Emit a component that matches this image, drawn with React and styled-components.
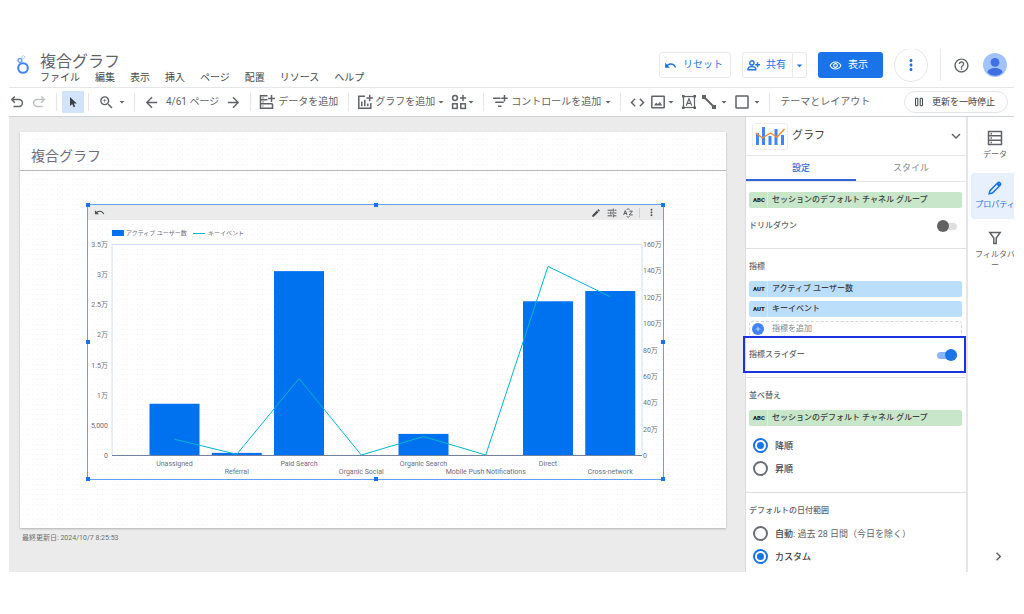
import React, { useState } from 'react'
import styled, { createGlobalStyle, css } from 'styled-components'
import {
    MdUndo,
    MdZoomIn,
    MdArrowBack,
    MdArrowForward,
    MdArrowDropDown,
    MdCode,
    MdMoreVert,
    MdHelpOutline,
    MdOutlineRemoveRedEye,
    MdEdit,
    MdExpandMore,
    MdChevronRight,
    MdAdd,
} from 'react-icons/md'

const GlobalStyle = createGlobalStyle`
    *{
        box-sizing:border-box;
    }

    body{
        margin:0;
        background:#ffffff;
        font-family:Roboto, "Noto Sans CJK JP", sans-serif;
        font-size:10px;
        line-height:16px;
        color:#3c4043;
    }

    button{
        font:inherit;
        color:inherit;
        background:none;
        border:0;
        padding:0;
        cursor:pointer;
    }

    h1, h2, p{
        margin:0;
        font-weight:400;
    }

    svg{
        display:block;
        flex:none;
    }
`

const Window = styled.div`
    display:flex;
    flex-direction:column;
    height:100vh;
    padding:49px 10px 42px 9px;
`

// HEADER
const Header = styled.header`
    display:flex;
    align-items:center;
    flex:none;
    height:38px;
    padding:0 7px 6px 7px;
    overflow:hidden;
`

const TitleBlock = styled.div`
    margin-left:10px;
    padding-top:8px;
`

const DocTitle = styled.h1`
    font-size:16px;
    line-height:18px;
    color:#5f6368;
`

const Menu = styled.nav`
    display:flex;
    gap:15px;
`

const MenuButton = styled.button`
    line-height:14px;
    color:#45484c;
`

const HeaderActions = styled.div`
    display:flex;
    align-items:center;
    margin-left:auto;
`

const OutlineButton = styled.button`
    display:flex;
    align-items:center;
    justify-content:center;
    gap:6px;
    height:26px;
    padding:0 7px 0 4px;
    border:1px solid #e8eaed;
    border-radius:3px;
    color:#1a73e8;
`

const SplitButton = styled.div`
    display:flex;
    margin:0 11px;

    ${OutlineButton}:first-child{
        padding:0 6px 0 4px;
        border-radius:3px 0 0 3px;
    }

    ${OutlineButton}:last-child{
        padding:0;
        border-left:0;
        border-radius:0 3px 3px 0;
    }
`

const ViewButton = styled.button`
    display:flex;
    align-items:center;
    gap:6px;
    height:26px;
    padding:0 15px 0 11px;
    border-radius:3px;
    background:#1a73e8;
    color:#ffffff;
`

const MoreButton = styled.button`
    display:grid;
    place-items:center;
    width:34px;
    height:34px;
    margin:0 12px 0 11px;
    border:1px solid #e4e6e9;
    border-radius:50%;
    color:#1a73e8;
`

const HeaderDivider = styled.span`
    width:1px;
    height:32px;
    margin-right:12px;
    background:#e8eaed;
`

const HelpButton = styled.button`
    margin-right:13px;
    color:#5f6368;
`

// TOOLBAR
const Toolbar = styled.div`
    display:flex;
    align-items:center;
    flex:none;
    height:30px;
    padding-right:6px;
    border-top:1px solid #e4e6e9;
    border-bottom:1px solid #cfd3d6;
    color:#5f6368;
    white-space:nowrap;
`

const ToolGroup = styled.div`
    display:flex;
    align-items:center;
    gap:${props => props.$gap || 0}px;
    padding:0 ${props => props.$end ?? 6}px 0 ${props => props.$start ?? 8}px;
    border-left:1px solid #e4e6e9;
    height:18px;

    &:first-child{
        border-left:0;
    }
`

const ToolButton = styled.button`
    display:flex;
    align-items:center;
    gap:${props => props.$gap ?? 3}px;
    opacity:${props => (props.disabled ? 0.4 : 1)};
`

const Caret = styled(MdArrowDropDown)`
    width:12px;
    height:12px;
    margin-left:-2px;
`

const PointerButton = styled.button`
    display:grid;
    place-items:center;
    width:22px;
    height:22px;
    border-radius:1px;
    background:#d2e3fc;
    color:#3c4043;
`

const PauseButton = styled.button`
    display:flex;
    align-items:center;
    gap:8px;
    height:22px;
    margin-left:auto;
    padding:0 12px 0 9px;
    border:1px solid #e4e6e9;
    border-radius:11px;
    font-size:9px;
    color:#3c4043;
`

// BODY
const Body = styled.div`
    display:flex;
    flex:1;
    min-height:0;
    overflow:hidden;
`

const Workspace = styled.main`
    flex:1;
    min-width:0;
    padding:15px 19px 0 11px;
    background:#ebebeb;
    border-right:1px solid #dddddd;
`

const Page = styled.section`
    padding-bottom:48px;
    background-color:#ffffff;
    background-image:radial-gradient(circle, #f1f1f3 0, #f1f1f3 0.5px, transparent 1px);
    background-size:5px 5px;
    box-shadow:0 1px 2px rgba(0,0,0,0.25);
`

const PageTitle = styled.h2`
    padding:14px 11px 4px;
    border-bottom:1px solid #b9b9b9;
    font-size:14px;
    line-height:20px;
    color:#6d6f7c;
`

const UpdatedAt = styled.p`
    padding:3px 2px;
    font-size:7px;
    line-height:14px;
    color:#6f6f6f;
`

const ChartFrame = styled.div`
    position:relative;
    margin:33px 62px 0 67px;
    border:1px solid #669df6;
`

const Handle = styled.i`
    position:absolute;
    left:${props => props.$x}%;
    top:${props => props.$y}%;
    width:4px;
    height:4px;
    margin:-2px;
    background:#1a73e8;
`

const ChartToolbar = styled.div`
    display:flex;
    align-items:center;
    gap:6px;
    height:15px;
    padding:0 6px;
    background:#ebebeb;
    color:#4a4d51;

    button:first-child{
        margin-right:auto;
    }
`

const ChartDivider = styled.span`
    width:1px;
    height:10px;
    background:#d0d0d0;
`

const ChartSvg = styled.svg`
    width:100%;
    height:auto;
    font-size:7px;
    fill:#6d6f7c;
`

// PROPERTY PANEL
const Panel = styled.aside`
    flex:none;
    width:222px;
    border-right:2px solid #e4e6e9;
    background:#ffffff;
`

const PanelHeader = styled.div`
    display:flex;
    align-items:center;
    height:39px;
    padding:0 1px 0 6px;
    border-bottom:1px solid #e4e6e9;
    font-size:11px;

    button{
        margin-left:auto;
        color:#5f6368;
    }
`

const ChartType = styled.span`
    display:grid;
    place-items:center;
    width:36px;
    height:27px;
    margin-right:4px;
    border:1px solid #eceef0;
    border-radius:3px;
`

const Tabs = styled.div`
    display:flex;
    border-bottom:1px solid #e4e6e9;
`

const Tab = styled.button`
    flex:1;
    height:25px;
    font-size:9px;
    font-weight:${props => (props.$active ? 500 : 400)};
    color:${props => (props.$active ? '#3367d6' : '#80868b')};
    border-bottom:2px solid ${props => (props.$active ? '#3367d6' : 'transparent')};
`

const Section = styled.section`
    position:relative;
    padding:10px 4px 12px 3px;
    border-bottom:1px solid #e0e0e0;
    font-size:8px;

    &:last-child{
        border-bottom:0;
    }
`

const SectionTitle = styled.h2`
    margin-bottom:6px;
    font-size:8px;
    font-weight:500;
    line-height:16px;
    color:#5f6368;
`

const Chip = styled.button`
    display:flex;
    align-items:center;
    width:100%;
    height:16px;
    margin-bottom:4px;
    border-radius:2px;
    background:${props => (props.$kind === 'ABC' ? '#c8e6c9' : '#bbdefb')};
    font-weight:500;
    color:#3c4043;

    b{
        width:19px;
        height:16px;
        margin-right:4px;
        padding-left:4px;
        border-right:1px solid rgba(255,255,255,0.35);
        font-size:6px;
        font-weight:900;
        text-align:left;
        color:#212121;
    }
`

const AddMetric = styled.button`
    display:flex;
    align-items:center;
    gap:8px;
    width:100%;
    height:16px;
    padding-left:2px;
    border:1px dashed #d5d7da;
    border-radius:2px;
    color:#80868b;

    svg{
        width:12px;
        height:12px;
        padding:2px;
        border-radius:50%;
        background:#4285f4;
        color:#ffffff;
    }
`

const SwitchLabel = styled.label`
    display:flex;
    align-items:center;
    justify-content:space-between;
    height:20px;
    margin-top:8px;
    padding-right:5px;
    font-weight:500;
    color:#5f6368;
`

const Switch = styled.input`
    appearance:none;
    display:grid;
    align-items:center;
    width:20px;
    height:12px;
    margin:0;

    &::before, &::after{
        content:"";
        grid-area:1 / 1;
    }

    &::before{
        height:7px;
        border-radius:4px;
        background:#dedede;
    }

    &::after{
        width:12px;
        height:12px;
        border-radius:50%;
        background:#616161;
    }

    &:checked::before{
        background:#8ab4f8;
    }

    &:checked::after{
        justify-self:end;
        background:#1a73e8;
    }
`

// frame laid over the panel around the slider setting
const Highlight = styled.span`
    position:absolute;
    left:-3px;
    right:0;
    bottom:4px;
    height:37px;
    border:2px solid #1b34e0;
    pointer-events:none;
`

const RadioGroup = styled.div`
    margin-top:${props => (props.$tight ? -3 : 8)}px;
`

const RadioLabel = styled.label`
    display:flex;
    align-items:center;
    gap:7px;
    height:23px;
    padding-left:4px;
    font-size:9px;
    font-weight:500;
    white-space:pre-wrap;
    color:#45484c;

    span span{
        font-weight:400;
        color:#5f6368;
    }
`

const Radio = styled.input`
    appearance:none;
    display:grid;
    place-items:center;
    width:15px;
    height:15px;
    margin:0;
    border:2px solid #6b6f74;
    border-radius:50%;

    &:checked{
        border-color:#1a73e8;
    }

    &:checked::before{
        content:"";
        width:7px;
        height:7px;
        border-radius:50%;
        background:#1a73e8;
    }
`

// RIGHT RAIL
const Rail = styled.nav`
    display:flex;
    flex-direction:column;
    flex:none;
    width:46px;
    padding:6px 0 7px 3px;
    background:#ffffff;
`

const RailButton = styled.button`
    display:flex;
    flex-direction:column;
    align-items:center;
    flex:none;
    gap:3px;
    width:48px;
    min-height:46px;
    padding:7px 4px 0;
    margin-bottom:4px;
    border-radius:3px;
    font-size:8px;
    line-height:11px;
    color:#5f6368;
    word-break:break-all;

    ${props =>
        props.$active &&
        css`
            background:#e8f0fe;
            color:#1a73e8;
        `}
`

const CollapseButton = styled.button`
    margin:auto 0 0 19px;
    color:#5f6368;
`

// ICONS
const Line = ({ size = 16, width = 1.5, children }) => (
    <svg width={size} height={size} viewBox="0 0 16 16" fill="none" stroke="currentColor" strokeWidth={width}>
        {children}
    </svg>
)

const Logo = () => (
    <svg width="14" height="22" viewBox="0 0 14 22" fill="none" stroke="#4285f4">
        <circle cx="7" cy="14" r="4.8" strokeWidth="2.1" />
        <circle cx="4" cy="6.5" r="2" strokeWidth="1.3" stroke="#669df6" />
        <circle cx="7.3" cy="3" r="1.4" strokeWidth="0.9" stroke="#aecbfa" />
    </svg>
)

const UndoIcon = () => (
    <Line>
        <path d="M5.8 2.5 2.8 5.6l3 3.1M3 5.6h7a3.4 3.4 0 0 1 0 6.8H4.5" />
    </Line>
)

const RedoIcon = () => (
    <Line>
        <path d="m10.2 2.5 3 3.1-3 3.1M13 5.6H6a3.4 3.4 0 0 0 0 6.8h5.5" />
    </Line>
)

const PointerIcon = () => (
    <svg width="12" height="12" viewBox="0 0 12 12" fill="currentColor">
        <path d="M3 1v9l2.2-2 1.4 3.2 1.6-.7-1.4-3.1h3z" />
    </svg>
)

const AddDataIcon = () => (
    <Line>
        <path d="M8.5 1.8h-7v12.4h12V9.8M1.5 5.8h7M1.5 9.8h12M12.5 1v7M9 4.5h7" />
        <path d="M3.4 3.8h1.2M3.4 7.8h1.2M3.4 12h1.2" strokeWidth="1.2" />
    </Line>
)

const AddChartIcon = () => (
    <Line>
        <path d="M8 2.2H1.8v12h12V9M12.7.8v6.4M9.5 4h6.4" />
        <path d="M4.8 7.5v4.7M7.8 5.8v6.4M10.8 9.5v2.7" />
    </Line>
)

const BlocksIcon = () => (
    <Line>
        <circle cx="4" cy="4" r="2.4" />
        <rect x="1.6" y="9.8" width="4.6" height="4.6" />
        <rect x="9.8" y="9.8" width="4.6" height="4.6" />
        <path d="M12 .8V7M9 4h6.2" />
    </Line>
)

const ControlIcon = () => (
    <Line>
        <path d="M1 4.2h7.5M3.3 8.2h8.4M6 12.2h3.4M12.5 1v6.4M9.3 4.2h6.4" />
    </Line>
)

const ImageIcon = () => (
    <Line>
        <rect x="1.8" y="2.2" width="12.4" height="11.6" rx="0.5" />
        <path d="m4 11.5 2.2-3 1.6 1.8 2-2.4 2.4 3.6z" fill="currentColor" stroke="none" />
    </Line>
)

const TextBoxIcon = () => (
    <Line width={1.2}>
        <rect x="2.5" y="2.5" width="11" height="11" />
        <path d="M5.3 11.6 8 4.6l2.7 7M6.2 9.4h3.6" />
        <path d="M1 1h2.6v2.6H1zM12.4 1H15v2.6h-2.6zM1 12.4h2.6V15H1zM12.4 12.4H15V15h-2.6z" fill="currentColor" stroke="none" />
    </Line>
)

const LineIcon = () => (
    <Line width={2}>
        <path d="m3 3 10 10" />
        <path d="M1 1h4v4H1zM11 11h4v4h-4z" fill="currentColor" stroke="none" />
    </Line>
)

const SquareIcon = () => (
    <Line>
        <rect x="2" y="2" width="12" height="12" rx="0.5" />
    </Line>
)

const PauseIcon = () => (
    <Line size={10} width={1.6}>
        <path d="M2.5 2h3.6v12H2.5zM9.9 2h3.6v12H9.9z" />
    </Line>
)

const ShareIcon = () => (
    <Line size={13} width={1.7}>
        <circle cx="6" cy="4.8" r="2.6" />
        <path d="M1.2 13.2v-1c0-2 3-2.8 4.8-2.8s4.8.8 4.8 2.8v1zM13 4v6M10 7h6" />
    </Line>
)

const Avatar = () => (
    <svg width="24" height="24" viewBox="0 0 24 24" role="img" aria-label="アカウント">
        <circle cx="12" cy="12" r="12" fill="#a1c2fa" />
        <circle cx="12" cy="9.3" r="4.4" fill="#3f6fe0" />
        <path d="M4.5 19.5c0-3 4-4.5 7.5-4.5s7.5 1.5 7.5 4.5c-1.8 2-4.6 3.3-7.5 3.3s-5.7-1.3-7.5-3.3z" fill="#3f6fe0" />
    </svg>
)

const TuneIcon = () => (
    <Line size={10}>
        <path d="M1 3.5h8M12 3.5h3M1 8h3M7 8h8M1 12.5h7M11 12.5h4M10 1v5M6 5.5v5M10 10v5" />
    </Line>
)

const SortIcon = () => (
    <Line size={10} width={1.4}>
        <path d="m1 11 2.7-7 2.7 7M2 8.8h3.5M10 5h5l-5 6h5.5M6 3l2.2-2.2L10.4 3M6 13l2.2 2.2 2.2-2.2" />
    </Line>
)

const ComboIcon = () => (
    <svg width="30" height="22" viewBox="0 0 30 22">
        <path d="M1 8h3v12H1zM7 2h3v18H7zM13.5 11h3v9h-3zM19.5 4h3v16h-3zM26 10h3v10h-3z" fill="#4285f4" />
        <path d="m1 8 6.5 5 8-5 6.5 4 7.5-8" fill="none" stroke="#fa8b2c" strokeWidth="1.4" />
    </svg>
)

const DataIcon = () => (
    <Line>
        <path d="M1.5 1.5h13v13h-13zM1.5 5.8h13M1.5 10.2h13" />
        <path d="M3.5 3.7h1.5M3.5 8h1.5M3.5 12.4h1.5" />
    </Line>
)

const PencilIcon = () => (
    <Line>
        <path d="M2.2 13.8 3 10.6 10.8 2.8a1.5 1.5 0 0 1 2.2 0l.2.2a1.5 1.5 0 0 1 0 2.2L5.4 13z" />
        <path d="m9.5 4.5 2-2 2.2 2-2 2.2z" fill="currentColor" stroke="none" />
    </Line>
)

const FilterIcon = () => (
    <Line>
        <path d="M2.8 2.5h10.4L9.2 8v5.5H6.8V8z" />
    </Line>
)

// CHART
const LEFT = 24
const RIGHT = 554
const TOP = 24
const BASE = 235
const STEP = 62.25
const FIRST = 86.5

const channels = [
    { name: 'Unassigned', users: 8500, events: 12 },
    { name: 'Referral', users: 350, events: 0.5 },
    { name: 'Paid Search', users: 30500, events: 58 },
    { name: 'Organic Social', users: 0, events: 0 },
    { name: 'Organic Search', users: 3500, events: 14 },
    { name: 'Mobile Push Notifications', users: 0, events: 0 },
    { name: 'Direct', users: 25500, events: 143 },
    { name: 'Cross-network', users: 27200, events: 120 },
]
const userTicks = ['0', '5,000', '1万', '1.5万', '2万', '2.5万', '3万', '3.5万']
const eventTicks = ['0', '20万', '40万', '60万', '80万', '100万', '120万', '140万', '160万']

const userY = value => BASE - (value / 35000) * (BASE - TOP)
const eventY = value => BASE - (value / 160) * (BASE - TOP)
const centerX = i => FIRST + i * STEP

const ComboChart = () => (
    <ChartSvg viewBox="0 0 575 259" role="img" aria-label="複合グラフ">
        <rect x="24" y="10" width="12" height="6" fill="#0072f0" />
        <text x="38" y="15" fontSize="6">アクティブ ユーザー数</text>
        <path d="M105 13.5h12" stroke="#00b6cb" />
        <text x="120" y="15" fontSize="6">キーイベント</text>
        <path d={`M${LEFT} ${BASE}V${TOP}.5H${RIGHT}V${BASE}`} fill="none" stroke="#cfe0f8" />
        {channels.map((c, i) => (
            <rect key={c.name} x={centerX(i) - 25} y={userY(c.users)} width="50" height={BASE - userY(c.users)} fill="#0072f0" />
        ))}
        <path d={`M${LEFT} ${BASE}.5H${RIGHT}`} stroke="#7481a3" />
        <polyline
            points={channels.map((c, i) => `${centerX(i)},${eventY(c.events)}`).join(' ')}
            fill="none"
            stroke="#00b6cb"
            strokeWidth="1"
        />
        {userTicks.map((tick, i) => (
            <text key={tick} x="20" y={userY(i * 5000) + 3} textAnchor="end">{tick}</text>
        ))}
        {eventTicks.map((tick, i) => (
            <text key={tick} x="555" y={eventY(i * 20) + 3}>{tick}</text>
        ))}
        {channels.map((c, i) => (
            <text key={c.name} x={centerX(i)} y={i % 2 ? 254 : 246} textAnchor="middle">{c.name}</text>
        ))}
    </ChartSvg>
)

const handles = [[0, 0], [50, 0], [100, 0], [0, 50], [100, 50], [0, 100], [50, 100], [100, 100]]
const menus = ['ファイル', '編集', '表示', '挿入', 'ページ', '配置', 'リソース', 'ヘルプ']

const Field = ({ kind, children }) => (
    <Chip $kind={kind}>
        <b>{kind}</b>
        {children}
    </Chip>
)

const App = () => {
    const [tab, setTab] = useState('設定')
    const [drillDown, setDrillDown] = useState(false)
    const [slider, setSlider] = useState(true)
    const [order, setOrder] = useState('desc')
    const [range, setRange] = useState('custom')

    return (
        <>
            <GlobalStyle />
            <Window>
                <Header>
                    <Logo />
                    <TitleBlock>
                        <DocTitle>複合グラフ</DocTitle>
                        <Menu>
                            {menus.map(name => (
                                <MenuButton key={name}>{name}</MenuButton>
                            ))}
                        </Menu>
                    </TitleBlock>
                    <HeaderActions>
                        <OutlineButton><MdUndo size={13} />リセット</OutlineButton>
                        <SplitButton>
                            <OutlineButton><ShareIcon />共有</OutlineButton>
                            <OutlineButton aria-label="共有メニュー"><MdArrowDropDown size={13} /></OutlineButton>
                        </SplitButton>
                        <ViewButton><MdOutlineRemoveRedEye size={13} />表示</ViewButton>
                        <MoreButton aria-label="その他"><MdMoreVert size={18} /></MoreButton>
                        <HeaderDivider />
                        <HelpButton aria-label="ヘルプ"><MdHelpOutline size={17} /></HelpButton>
                        <Avatar />
                    </HeaderActions>
                </Header>

                <Toolbar>
                    <ToolGroup $start={0} $end={9} $gap={6}>
                        <ToolButton aria-label="元に戻す"><UndoIcon /></ToolButton>
                        <ToolButton aria-label="やり直す" disabled><RedoIcon /></ToolButton>
                    </ToolGroup>
                    <ToolGroup $start={5} $end={4}>
                        <PointerButton aria-label="選択"><PointerIcon /></PointerButton>
                    </ToolGroup>
                    <ToolGroup $start={9} $end={6}>
                        <ToolButton aria-label="ズーム"><MdZoomIn size={17} /><Caret /></ToolButton>
                    </ToolGroup>
                    <ToolGroup $gap={6} $end={8}>
                        <ToolButton aria-label="前のページ"><MdArrowBack size={17} /></ToolButton>
                        <span>4/61 ページ</span>
                        <ToolButton aria-label="次のページ"><MdArrowForward size={17} /></ToolButton>
                    </ToolGroup>
                    <ToolGroup $end={10}>
                        <ToolButton><AddDataIcon />データを追加</ToolButton>
                    </ToolGroup>
                    <ToolGroup $gap={4}>
                        <ToolButton $gap={2}><AddChartIcon />グラフを追加<Caret /></ToolButton>
                        <ToolButton $gap={0} aria-label="コミュニティ ビジュアリゼーション"><BlocksIcon /><Caret /></ToolButton>
                    </ToolGroup>
                    <ToolGroup>
                        <ToolButton><ControlIcon />コントロールを追加<Caret /></ToolButton>
                    </ToolGroup>
                    <ToolGroup $gap={4}>
                        <ToolButton aria-label="埋め込み"><MdCode size={17} /></ToolButton>
                        <ToolButton $gap={1} aria-label="画像"><ImageIcon /><Caret /></ToolButton>
                        <ToolButton aria-label="テキスト"><TextBoxIcon /></ToolButton>
                        <ToolButton aria-label="線"><LineIcon /><Caret /></ToolButton>
                        <ToolButton aria-label="図形"><SquareIcon /><Caret /></ToolButton>
                    </ToolGroup>
                    <ToolGroup $start={10}>
                        <ToolButton>テーマとレイアウト</ToolButton>
                    </ToolGroup>
                    <PauseButton><PauseIcon />更新を一時停止</PauseButton>
                </Toolbar>

                <Body>
                    <Workspace>
                        <Page>
                            <PageTitle>複合グラフ</PageTitle>
                            <ChartFrame>
                                <ChartToolbar>
                                    <button aria-label="元に戻す"><MdUndo size={11} /></button>
                                    <button aria-label="編集"><MdEdit size={10} /></button>
                                    <button aria-label="調整"><TuneIcon /></button>
                                    <button aria-label="並べ替え"><SortIcon /></button>
                                    <ChartDivider />
                                    <button aria-label="その他"><MdMoreVert size={11} /></button>
                                </ChartToolbar>
                                <ComboChart />
                                {handles.map(([x, y]) => (
                                    <Handle key={`${x}-${y}`} $x={x} $y={y} />
                                ))}
                            </ChartFrame>
                        </Page>
                        <UpdatedAt>最終更新日: 2024/10/7 8:25:53</UpdatedAt>
                    </Workspace>

                    <Panel>
                        <PanelHeader>
                            <ChartType><ComboIcon /></ChartType>
                            グラフ
                            <button aria-label="グラフの種類"><MdExpandMore size={18} /></button>
                        </PanelHeader>
                        <Tabs>
                            {['設定', 'スタイル'].map(name => (
                                <Tab key={name} $active={tab === name} onClick={() => setTab(name)}>{name}</Tab>
                            ))}
                        </Tabs>
                        <Section>
                            <Field kind="ABC">セッションのデフォルト チャネル グループ</Field>
                            <SwitchLabel>
                                ドリルダウン
                                <Switch type="checkbox" role="switch" checked={drillDown} onChange={e => setDrillDown(e.target.checked)} />
                            </SwitchLabel>
                        </Section>
                        <Section>
                            <SectionTitle>指標</SectionTitle>
                            <Field kind="AUT">アクティブ ユーザー数</Field>
                            <Field kind="AUT">キーイベント</Field>
                            <AddMetric><MdAdd />指標を追加</AddMetric>
                            <SwitchLabel>
                                指標スライダー
                                <Switch type="checkbox" role="switch" checked={slider} onChange={e => setSlider(e.target.checked)} />
                            </SwitchLabel>
                            <Highlight />
                        </Section>
                        <Section>
                            <SectionTitle>並べ替え</SectionTitle>
                            <Field kind="ABC">セッションのデフォルト チャネル グループ</Field>
                            <RadioGroup>
                                <RadioLabel>
                                    <Radio type="radio" name="order" checked={order === 'desc'} onChange={() => setOrder('desc')} />
                                    降順
                                </RadioLabel>
                                <RadioLabel>
                                    <Radio type="radio" name="order" checked={order === 'asc'} onChange={() => setOrder('asc')} />
                                    昇順
                                </RadioLabel>
                            </RadioGroup>
                        </Section>
                        <Section>
                            <SectionTitle>デフォルトの日付範囲</SectionTitle>
                            <RadioGroup $tight>
                                <RadioLabel>
                                    <Radio type="radio" name="range" checked={range === 'auto'} onChange={() => setRange('auto')} />
                                    <span>自動<span>: 過去 28 日間（今日を除く）</span></span>
                                </RadioLabel>
                                <RadioLabel>
                                    <Radio type="radio" name="range" checked={range === 'custom'} onChange={() => setRange('custom')} />
                                    カスタム
                                </RadioLabel>
                            </RadioGroup>
                        </Section>
                    </Panel>

                    <Rail>
                        <RailButton><DataIcon />データ</RailButton>
                        <RailButton $active><PencilIcon />プロパティ</RailButton>
                        <RailButton><FilterIcon />フィルタバー</RailButton>
                        <CollapseButton aria-label="折りたたむ"><MdChevronRight size={17} /></CollapseButton>
                    </Rail>
                </Body>
            </Window>
        </>
    )
}

export default App
